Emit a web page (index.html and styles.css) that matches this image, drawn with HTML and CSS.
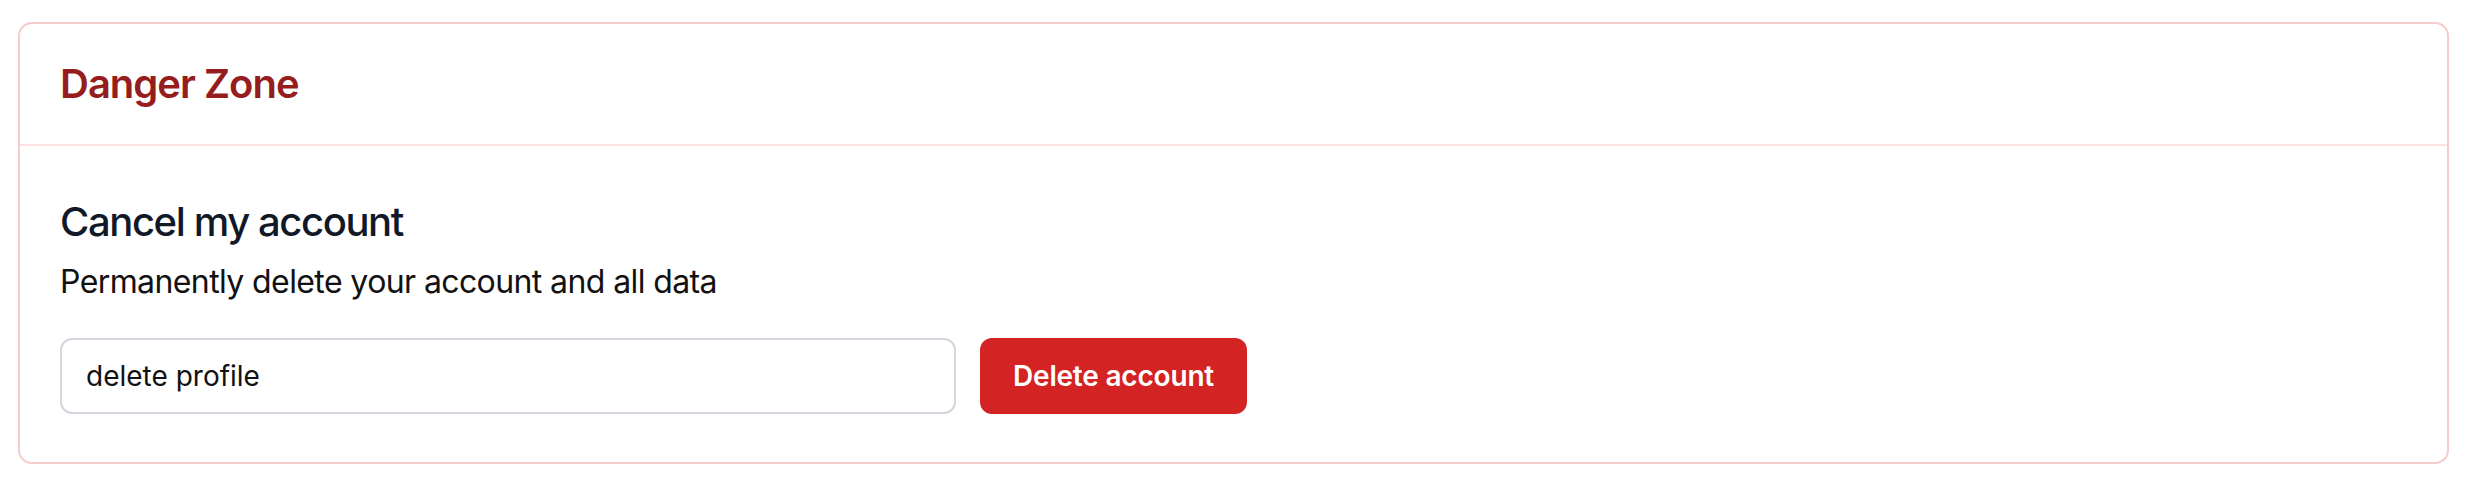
FILE: index.html
```html
<!DOCTYPE html>
<html lang="en">
<head>
<meta charset="utf-8">
<title>Danger Zone</title>
<link rel="stylesheet" href="styles.css">
</head>
<body>
  <section class="card">
    <header class="card-header">
      <h2 class="card-title">Danger Zone</h2>
    </header>
    <div class="card-body">
      <h3 class="section-title">Cancel my account</h3>
      <p class="section-desc">Permanently delete your account and all data</p>
      <form class="confirm-row">
        <input class="confirm-input" type="text" value="delete profile">
        <button class="btn-danger" type="button">Delete account</button>
      </form>
    </div>
  </section>
</body>
</html>
```

FILE: styles.css
```css
* {
  box-sizing: border-box;
}

html, body {
  background: #ffffff;
}

body {
  margin: 22px 23px 0 18px;
  font-family: Inter, "Noto Sans", "Liberation Sans", sans-serif;
  color: #111111;
}

.card {
  border: 2px solid #f6cbcb;
  border-radius: 14px;
  background: #ffffff;
}

.card-header {
  padding: 32px 40px;
  border-bottom: 2px solid #fbe1e1;
}

.card-title {
  margin: 0;
  font-size: 40px;
  line-height: 56px;
  font-weight: 600;
  letter-spacing: -1px;
  color: #951d1d;
}

.card-body {
  padding: 48px 40px;
}

.section-title {
  margin: 0 0 8px;
  font-size: 40px;
  line-height: 56px;
  font-weight: 500;
  letter-spacing: -1.4px;
  color: #111827;
}

.section-desc {
  margin: 0;
  font-size: 32px;
  line-height: 48px;
  letter-spacing: -0.6px;
  color: #111111;
}

.confirm-row {
  display: flex;
  align-items: stretch;
  gap: 24px;
  margin: 32px 0 0;
}

.confirm-input {
  width: 100%;
  max-width: 896px;
  height: 76px;
  padding: 0 24px;
  border: 2px solid #d3d6dc;
  border-radius: 12px;
  font-family: inherit;
  font-size: 28px;
  color: #111111;
  background: #ffffff;
  outline: none;
}

.btn-danger {
  flex: none;
  height: 76px;
  padding: 0 33px;
  border: none;
  border-radius: 12px;
  background: #d32323;
  color: #ffffff;
  font-family: inherit;
  font-size: 28px;
  font-weight: 600;
  letter-spacing: -0.2px;
  cursor: pointer;
}
```
